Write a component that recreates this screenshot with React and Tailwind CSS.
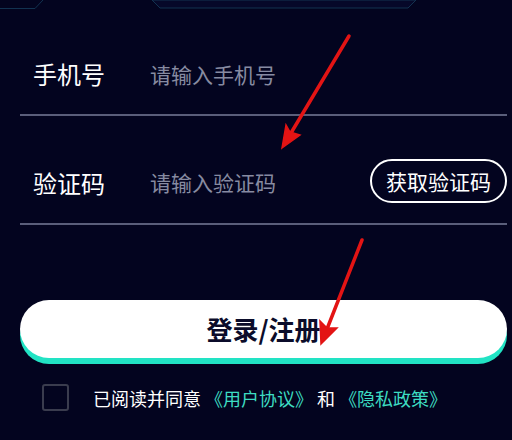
export default function App() {
  return (
    <div
      className="relative w-[512px] h-[440px] overflow-hidden bg-[#03041f] text-white"
      style={{ fontFamily: '"Noto Sans CJK SC", "Noto Sans", sans-serif' }}
    >
      {/* top decoration */}
      <svg className="absolute left-0 top-0" width="512" height="12" viewBox="0 0 512 12">
        <polyline points="0,8.5 35,8.5 43,0" fill="none" stroke="#123250" strokeWidth="1" />
        <polygon points="152,0 160,8 408,8 416,0" fill="#060829" stroke="#123250" strokeWidth="1" />
      </svg>

      <div className="ml-[20px] mr-[5px]">
        <div className="h-[116px] flex items-end pb-[19px] border-b-2 border-[#5a5e7a]">
          <div className="h-[44px] flex items-center pl-[13px]">
            <span className="w-[117px] text-[24px] leading-none pt-[1px]">手机号</span>
            <span className="text-[21px] leading-none text-[#878ba1] pt-[2px]">请输入手机号</span>
          </div>
        </div>
        <div className="h-[109px] flex items-end pb-[20px] border-b-2 border-[#5a5e7a]">
          <div className="h-[44px] w-full flex items-center pl-[13px]">
            <span className="w-[117px] text-[24px] leading-none pt-[3px]">验证码</span>
            <span className="flex-1 text-[21px] leading-none text-[#878ba1] pt-[3px]">请输入验证码</span>
            <div className="h-[44px] w-[137px] rounded-full border-2 border-white flex items-center justify-center text-[21px] leading-none">
              获取验证码
            </div>
          </div>
        </div>
      </div>

      <div className="ml-[20px] mr-[5px] mt-[75px] h-[58px] rounded-full bg-white shadow-[0_6px_0_#22e3c4] flex items-center justify-center">
        <span className="text-[26px] font-bold leading-none text-[#0b0c2a]">登录/注册</span>
      </div>

      <div className="mt-[26px] pl-[42px] flex items-center">
        <div className="w-[27px] h-[27px] border-2 border-[#3a3c4e] rounded-[3px]" />
        <div className="ml-[24px] text-[18px] leading-none whitespace-pre">
          <span>已阅读并同意 </span>
          <span className="text-[#3ddcc2]">《用户协议》</span>
          <span> 和 </span>
          <span className="text-[#3ddcc2]">《隐私政策》</span>
        </div>
      </div>

      {/* annotation arrows */}
      <svg className="absolute left-0 top-0 pointer-events-none" width="512" height="440" viewBox="0 0 512 440">
        <g fill="#e31414" stroke="#e31414" strokeLinecap="round">
          <line x1="349" y1="36" x2="291" y2="133" strokeWidth="3.5" />
          <polygon points="282,148 300,135 290,132 286,125" strokeWidth="1.5" />
          <line x1="362" y1="240" x2="327" y2="329" strokeWidth="3.5" />
          <polygon points="321,344 337,328 327,328 320,321" strokeWidth="1.5" />
        </g>
      </svg>
    </div>
  );
}
